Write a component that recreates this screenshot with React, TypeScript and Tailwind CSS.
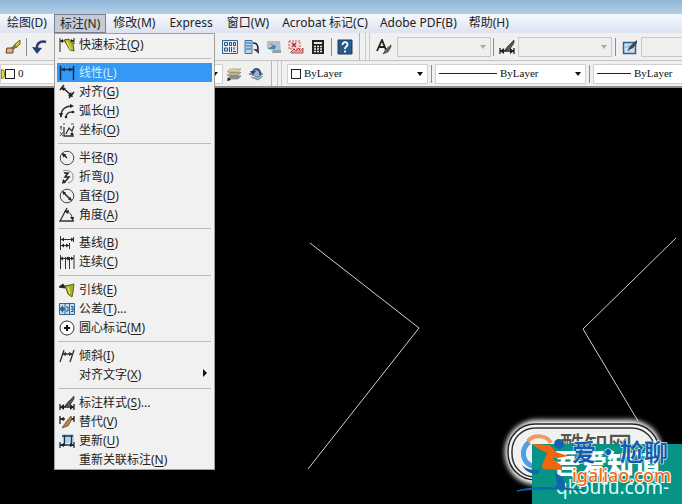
import React from "react";

const uiFont = "font-['Noto_Sans','Noto_Sans_CJK_SC',sans-serif]";

const K = "#222";

const glyphs: Record<string, React.ReactNode> = {
  quick: (
    <>
      <path d="M1 1v14M1 4h14M15 1v6" stroke={K} fill="none" />
      <path d="M1 4l3-2v4zM15 4l-3-2v4z" fill={K} />
      <path d="M5 3l5-1 4 5 1 7-4-1-3-5z" fill="#b9bd2c" stroke="#5b5a16" />
      <path d="M8 5l4 8" stroke="#f3f19a" />
    </>
  ),
  linear: (
    <>
      <path d="M1.500 1v14M14.500 1v14M2 4.500h12" stroke="#0d2d52" strokeWidth="1.500" fill="none" />
      <path d="M2 4.500l4-2v4zM14 4.500l-4-2v4z" fill="#0d2d52" />
    </>
  ),
  aligned: (
    <>
      <path d="M4 4l8 7M1 6l4-5M10 14l5-6" stroke={K} strokeWidth="1.500" fill="none" />
      <path d="M2 3l5 1-3 3zM14 13l-5-1 3-4z" fill={K} />
    </>
  ),
  arc: (
    <>
      <path d="M2 14C2 7 6 3 13 3M7 15c0-4 2-6 6-6" stroke="#333" strokeWidth="1.300" fill="none" />
      <path d="M15 3l-4-2v4zM2 15l-2-5h4z" fill={K} />
      <circle cx="14" cy="9" r="1.300" fill={K} />
      <circle cx="7" cy="14" r="1.300" fill={K} />
    </>
  ),
  ordinate: (
    <>
      <path d="M5 5v9h10M7 12l3-6 3 3 2-5" stroke="#333" fill="none" strokeWidth="1.300" />
      <path d="M1 4l1 2 1-2M2 6v2M1 10l3 4M4 10l-3 4M12 2h3M5 1v2" stroke="#555" fill="none" />
      <circle cx="13" cy="12" r="1.500" fill={K} />
    </>
  ),
  radius: (
    <>
      <circle cx="8" cy="8" r="6.800" fill="none" stroke="#444" />
      <path d="M8 8L4 4" stroke={K} strokeWidth="1.500" />
      <path d="M2.500 3l5 1.500-3 3z" fill={K} />
    </>
  ),
  jogged: (
    <>
      <path d="M4 2c5-2 11 1 10 6 0 4-2 5-5 6" fill="none" stroke="#888" />
      <path d="M5 4h4L6 8h4l-5 6" fill="none" stroke={K} strokeWidth="1.500" />
      <path d="M3 15l1-5 3 3z" fill={K} />
    </>
  ),
  diameter: (
    <>
      <circle cx="8" cy="8" r="6.800" fill="none" stroke="#444" />
      <path d="M4 4l8 8" stroke={K} strokeWidth="1.500" />
      <path d="M3 3l4 1.500-2.500 2.500zM13 13l-4-1.500 2.500-2.500z" fill={K} />
    </>
  ),
  angular: (
    <>
      <path d="M8 1L1 14h14" fill="none" stroke="#333" strokeWidth="1.300" />
      <path d="M7 4c4 1 6 4 6 8" fill="none" stroke="#444" />
      <path d="M5 4l5-1-1 4zM14 14l-3-4h4z" fill={K} />
    </>
  ),
  baseline: (
    <>
      <path d="M1.500 1v14M2 4.500h13M2 10.500h8M10.500 8v6M14.500 2v5" stroke="#333" fill="none" />
      <path d="M2 4.500l3-2v4zM15 4.500l-3-2v4zM2 10.500l3-2v4zM10 10.500l-3-2v4z" fill={K} />
    </>
  ),
  cont: (
    <>
      <path d="M1.500 1v14M6.500 3v12M10.500 3v12M15 1v14M1 4.500h14" stroke="#333" fill="none" />
      <path d="M1 4.500l3-2v4zM7 4.500l2-2 2 2-2 2zM15 4.500l-3-2v4z" fill={K} />
    </>
  ),
  leader: (
    <>
      <path d="M0 5l4-3 2 4zM3 4h4" fill={K} stroke={K} />
      <path d="M6 4l5-1 4-1-1 8-1 5-4-3z" fill="#a9ae2c" stroke="#5d601c" />
      <path d="M9 5l2 7" stroke="#f3f19a" />
    </>
  ),
  tolerance: (
    <>
      <path d="M.5 2.500h15v11H.5zM6 3v10M10.500 3v10" fill="#c4e0f5" stroke="#2d6794" />
      <circle cx="3.300" cy="8" r="1.800" fill="none" stroke="#204f7a" />
      <path d="M3.300 4.500v7M1 8h5M7 6h2v4H7M12 5.500h2v5h-2M12 8h2" stroke="#204f7a" fill="none" />
    </>
  ),
  center: (
    <>
      <circle cx="8" cy="8" r="7" fill="#fff" stroke="#333" />
      <path d="M8 5v6M5 8h6" stroke="#111" strokeWidth="2" />
    </>
  ),
  oblique: (
    <>
      <path d="M5 2L1 14M15 2l-4 12M4 6h10" fill="none" stroke="#333" strokeWidth="1.300" />
      <path d="M3 6l4-2v4zM14 6l-4-2v4z" fill="#333" />
    </>
  ),
  style: (
    <>
      <path d="M1 9v6M15 9v6M1 12h14" stroke={K} strokeWidth="1.300" />
      <path d="M1 12l4-3v6zM15 12l-4-3v6z" fill={K} />
      <path d="M15 1L9 7l-4 5 6-2 4-6z" fill="#555" stroke={K} strokeWidth=".6" />
    </>
  ),
  override: (
    <>
      <path d="M1 2v8M15 2v6M1 5h5M10 5h5" stroke={K} strokeWidth="1.300" />
      <path d="M1 5l4-2v4zM15 5l-4-2v4z" fill={K} />
      <path d="M12 2L7 8l-4 6 6-2 4-7z" fill="#b98445" stroke="#66401a" strokeWidth=".7" />
    </>
  ),
  update: (
    <>
      <path d="M3 1h12v9H4z" fill="#b7d6ec" />
      <path d="M3 3h11M5.500 2v11M12.500 2v11M1 12h14M1 9v6M15 9v6" stroke="#1e344a" fill="none" strokeWidth="1.300" />
      <path d="M1 12l4-2v4zM15 12l-4-2v4z" fill={K} />
    </>
  ),
  match: (
    <>
      <path d="M15 1L9 6l2 3 4-4z" fill="#d8c33a" stroke="#75611c" />
      <path d="M10 5l-4 4 2 2 4-3z" fill="#5f8a3c" />
      <path d="M2 9h6v5H1z" fill="#e8a89a" stroke="#6b3d22" />
    </>
  ),
  undo: (
    <>
      <path d="M14 3C8 1 4 5 5 11" fill="none" stroke="#27426f" strokeWidth="2.500" />
      <path d="M0 8l10 1-5 6z" fill="#27426f" />
    </>
  ),
  palette: (
    <>
      <path d="M.5 1.500h15v13H.5z" fill="#e4edf5" stroke="#3a648a" />
      <path d="M2.500 3.500h3v3h-3zM7.500 3.500h2v3h-2zM11.500 3.500h2v3h-2zM2.500 9h3v3h-3z" fill="#cfe1f1" stroke="#2f5378" />
      <path d="M7.500 8v5M9.500 8v5M12 8v3M11 12.500h3" stroke="#2f5378" />
    </>
  ),
  sheets: (
    <>
      <path d="M1 1.500h7v13H1z" fill="#b7d4ec" stroke="#3675a8" />
      <path d="M2 4h5M2 7h5M2 10h5" stroke="#2e6797" />
      <path d="M9 4c4 0 5 2 5 7" fill="none" stroke={K} strokeWidth="1.500" />
      <path d="M9 10h6v5z" fill="#445" />
    </>
  ),
  markup: (
    <>
      <path d="M1 2h13l1 11H8L1 9z" fill="#b4c1cb" />
      <path d="M3 4l7 3-1 3H1l6-3z" fill="#3f86aa" />
      <path d="M7 11h8v3H6z" fill="#8fa0ad" />
    </>
  ),
  cloud: (
    <>
      <path d="M1 2h11v8H1z" fill="#f5d7d7" stroke="#c25459" strokeDasharray="2 1" />
      <path d="M4 4l4 4M8 4L4 8" stroke="#b52d38" strokeWidth="1.500" />
      <path d="M3 13l3-3 2 2 3-3 1 3 3-3v5H3z" fill="#e3aaa9" stroke="#b64b51" />
    </>
  ),
  calc: (
    <>
      <path d="M2 1h12v14H2z" fill="#222" />
      <path d="M4 3h8v2H4z" fill="#dfe5dc" />
      <path d="M4 7.500h8M4 10h8M4 12.500h8" stroke="#eee" strokeWidth="1.300" strokeDasharray="2 1" />
    </>
  ),
  help: (
    <>
      <path d="M1 1h14v14H1z" fill="#28598c" stroke="#163c66" />
      <path d="M5.500 6c0-4 5.500-3.500 5 0-.3 1.500-2.500 1.500-2.500 4M8 11.500v2" stroke="#fff" strokeWidth="1.800" fill="none" />
    </>
  ),
  textStyle: (
    <>
      <path d="M1 12L6 1l4 10M3 8h6" fill="none" stroke="#222" strokeWidth="1.800" />
      <path d="M15 6l-5 4-3 5 5-2 3-5z" fill="#666" stroke="#333" strokeWidth=".6" />
    </>
  ),
  tableStyle: (
    <>
      <path d="M1.500 3.500h12v11h-12z" fill="#cce0f0" stroke="#2f5f8a" strokeWidth="1.500" />
      <path d="M3 8h9M7 5v8" stroke="#8bb0cf" />
      <path d="M15 1L9 6l-4 6 6-3 4-5z" fill="#34495e" />
    </>
  ),
  layers: (
    <>
      <path d="M4 3h11l-3 3H1z" fill="#e9d98a" stroke="#8f8440" strokeWidth=".6" />
      <path d="M4 6.500h11l-3 3H1z" fill="#b9b58e" stroke="#777" strokeWidth=".6" />
      <path d="M4 10h11l-3 3H3z" fill="#8e979b" stroke="#666" strokeWidth=".6" />
      <path d="M1 15l1-4 3 3z" fill={K} />
    </>
  ),
  layerPrev: (
    <>
      <path d="M1 8l8-4 6 4-5 3zM3 11l7 3 5-4" fill="#9cb3c9" stroke="#50677f" strokeWidth=".7" />
      <path d="M12 9c1-6-4-8-7-4" fill="none" stroke="#27496f" strokeWidth="1.800" />
      <path d="M2 5l6 0-3 4z" fill="#27496f" />
    </>
  ),
};

function Icon({ name }: { name: string }) {
  return (
    <svg viewBox="0 0 16 16" className="size-4 shrink-0" aria-hidden="true">
      {glyphs[name]}
    </svg>
  );
}

type Item = { icon?: string; label: string; mnemonic: string; more?: string; sub?: boolean; active?: boolean };

const groups: Item[][] = [
  [{ icon: "quick", label: "快速标注", mnemonic: "Q" }],
  [
    { icon: "linear", label: "线性", mnemonic: "L", active: true },
    { icon: "aligned", label: "对齐", mnemonic: "G" },
    { icon: "arc", label: "弧长", mnemonic: "H" },
    { icon: "ordinate", label: "坐标", mnemonic: "O" },
  ],
  [
    { icon: "radius", label: "半径", mnemonic: "R" },
    { icon: "jogged", label: "折弯", mnemonic: "J" },
    { icon: "diameter", label: "直径", mnemonic: "D" },
    { icon: "angular", label: "角度", mnemonic: "A" },
  ],
  [
    { icon: "baseline", label: "基线", mnemonic: "B" },
    { icon: "cont", label: "连续", mnemonic: "C" },
  ],
  [
    { icon: "leader", label: "引线", mnemonic: "E" },
    { icon: "tolerance", label: "公差", mnemonic: "T", more: "..." },
    { icon: "center", label: "圆心标记", mnemonic: "M" },
  ],
  [
    { icon: "oblique", label: "倾斜", mnemonic: "I" },
    { label: "对齐文字", mnemonic: "X", sub: true },
  ],
  [
    { icon: "style", label: "标注样式", mnemonic: "S", more: "..." },
    { icon: "override", label: "替代", mnemonic: "V" },
    { icon: "update", label: "更新", mnemonic: "U" },
    { label: "重新关联标注", mnemonic: "N" },
  ],
];

function DimensionMenu() {
  return (
    <div role="menu" className="absolute left-0 top-full z-20 w-[161px] border border-[#a0a0a0] bg-[#f1f1f1] px-0.5 pt-px">
      {groups.map((group, g) => (
        <div key={g} role="group">
          {g > 0 && (
            <div className="flex h-[9px] items-center px-px">
              <div className="h-px w-full bg-[#bdbdbd]" />
            </div>
          )}
          {group.map((item) => (
            <button
              key={item.label}
              role="menuitem"
              className={`flex h-[19px] w-full items-center gap-1 pl-0.5 text-left text-xs whitespace-nowrap ${
                item.active ? "bg-[#3399f5] text-[#c9f0ff]" : "text-[#222]"
              }`}
            >
              {item.icon ? <Icon name={item.icon} /> : <span className="size-4 shrink-0" />}
              <span className="flex-1">
                {item.label}(<u className="underline-offset-2">{item.mnemonic}</u>){item.more}
              </span>
              {item.sub && (
                <svg viewBox="0 0 6 8" className="mr-1 mb-1 h-2 w-1.5" aria-hidden="true">
                  <path d="M1 0l4 4-4 4z" fill="#111" />
                </svg>
              )}
            </button>
          ))}
        </div>
      ))}
    </div>
  );
}

function MenuBar() {
  const item = "h-[18px] px-[7px] leading-[18px] whitespace-nowrap";
  return (
    <nav className="flex h-[19px] bg-linear-to-b from-[#f5f8fd] to-[#dce3f1] text-xs text-[#222]">
      <button className={item}>绘图(D)</button>
      <div className="relative">
        <button aria-expanded="true" className="h-[19px] border border-[#777f8b] bg-[#c5ccd8] px-[5px] leading-[17px] whitespace-nowrap">
          标注(N)
        </button>
        <DimensionMenu />
      </div>
      {["修改(M)", "Express", "窗口(W)"].map((label) => (
        <button key={label} className={item}>{label}</button>
      ))}
      {["Acrobat 标记(C)", "Adobe PDF(B)", "帮助(H)"].map((label) => (
        <button key={label} className="h-[18px] px-1.5 leading-[18px] whitespace-nowrap">{label}</button>
      ))}
    </nav>
  );
}

function Tool({ name, label }: { name: string; label: string }) {
  return (
    <button aria-label={label} className="flex w-[22px] shrink-0 justify-center">
      <Icon name={name} />
    </button>
  );
}

function Divider() {
  return <div className="h-[18px] w-px shrink-0 bg-[#8c8c8c]" />;
}

function Grip() {
  return (
    <div className="flex h-full shrink-0 gap-[3px]">
      <div className="w-px bg-[#b5b5b5]" />
      <div className="ml-0.5 w-px bg-[#c9c9c9]" />
      <div className="w-px bg-[#c9c9c9]" />
    </div>
  );
}

function Arrow({ muted }: { muted?: boolean }) {
  return (
    <svg viewBox="0 0 8 4" className="h-1 w-2 shrink-0" aria-hidden="true">
      <path d="M1 0h6L4 4z" fill={muted ? "#aaa" : "#111"} />
    </svg>
  );
}

function Combo({ label, value, lead, width, disabled }: {
  label: string;
  value: string;
  lead?: React.ReactNode;
  width: string;
  disabled?: boolean;
}) {
  return (
    <label
      className={`flex h-5 items-center gap-[3px] overflow-hidden border pr-[3px] ${width} ${
        disabled ? "border-[#c8c8c8] bg-[#efefef]" : "border-[#d0d0d0] bg-white"
      }`}
    >
      {lead}
      <select
        aria-label={label}
        disabled={disabled}
        className="min-w-0 flex-1 appearance-none bg-transparent font-['Liberation_Serif',serif] text-[11px] font-medium text-[#111] outline-none"
      >
        <option>{value}</option>
      </select>
      <Arrow muted={disabled} />
    </label>
  );
}

function Toolbars() {
  return (
    <div className="border-b-2 border-[#8b8b8b] bg-[#f0f0f0]">
      <div className="flex h-7 items-center overflow-hidden border-b border-[#c4c4c4]">
        <div className="flex w-[219px] shrink-0 items-center pl-0.5">
          <Tool name="match" label="特性匹配" />
          <div className="px-0.5"><Divider /></div>
          <Tool name="undo" label="放弃" />
        </div>
        <Tool name="palette" label="工具选项板" />
        <Tool name="sheets" label="图纸集" />
        <Tool name="markup" label="标记集" />
        <Tool name="cloud" label="修订云线" />
        <Tool name="calc" label="计算器" />
        <div className="px-0.5"><Divider /></div>
        <Tool name="help" label="帮助" />
        <div className="h-full px-[3px]"><Grip /></div>
        <Tool name="textStyle" label="文字样式" />
        <Combo label="文字样式列表" value="" width="ml-0.5 w-[94px] shrink-0" disabled />
        <div className="px-0.5"><Divider /></div>
        <Tool name="style" label="标注样式" />
        <Combo label="标注样式列表" value="" width="w-[94px] shrink-0" disabled />
        <div className="px-[3px]"><Divider /></div>
        <Tool name="tableStyle" label="表格样式" />
        <Combo label="表格样式列表" value="" width="-mr-5 min-w-[60px] flex-1" disabled />
      </div>
      <div className="flex h-[25px] items-center overflow-hidden">
        <Combo
          label="图层"
          value="0"
          width="w-[223px] shrink-0"
          lead={
            <span className="flex items-center">
              <span className="h-2.5 w-1 rounded-r-full border border-[#8b8b20] bg-[#e1e14a]" />
              <span className="size-2.5 border border-[#222]" />
            </span>
          }
        />
        <Tool name="layers" label="图层特性" />
        <Tool name="layerPrev" label="上一个图层" />
        <div className="h-full pr-[5px] pl-1"><Grip /></div>
        <Combo
          label="颜色"
          value="ByLayer"
          width="w-[141px] shrink-0 pl-[3px]"
          lead={<span className="size-2.5 border border-[#222]" />}
        />
        <div className="px-[3px]"><Divider /></div>
        <Combo
          label="线型"
          value="ByLayer"
          width="w-[151px] shrink-0 pl-[3px]"
          lead={<span className="h-px w-[58px] shrink-0 bg-[#222]" />}
        />
        <div className="px-[3px]"><Divider /></div>
        <Combo
          label="线宽"
          value="ByLayer"
          width="-mr-5 min-w-[100px] flex-1 pl-[3px]"
          lead={<span className="h-px w-[34px] shrink-0 bg-[#222]" />}
        />
      </div>
    </div>
  );
}

function Watermark() {
  return (
    <svg
      viewBox="500 414 182 90"
      className="absolute right-0 bottom-0 h-[90px] w-[182px] font-['Noto_Sans_CJK_SC',sans-serif]"
    >
      <defs>
        <filter id="glow" x="-20%" y="-30%" width="140%" height="160%">
          <feGaussianBlur stdDeviation="2.500" />
        </filter>
      </defs>
      <rect x="505" y="420" width="157" height="65" rx="32" fill="#fff" filter="url(#glow)" />
      <rect x="508" y="424" width="151" height="56" rx="27" fill="#f4f4f4" stroke="#222" strokeWidth="1.500" />
      <rect x="512" y="428" width="143" height="49" rx="23" fill="#f1f1f1" stroke="#333" strokeWidth="1.500" />
      <path d="M534 467c-12-4-14-17-5-25" fill="none" stroke="#4c9fe0" strokeWidth="5" />
      <path d="M528 441c6-7 19-6 23 2" fill="none" stroke="#ed9a63" strokeWidth="4" />
      <text x="560" y="454" fontSize="24" fontWeight="500" fill="#55554b">酷知网</text>
      <rect x="532" y="444" width="150" height="60" fill="#079487" />
      <text x="553" y="474" fontSize="27" fontWeight="900" fill="#fff">吾爱知道</text>
      <text x="550" y="494" fontSize="19" fill="#d9fff8" className="font-['Noto_Sans',sans-serif]">-qkoufu.com-</text>
      <path d="M517 491c17-5 35-4 67-1-25-1-48-2-67 1z" fill="#1263ad" stroke="#1263ad" />
      <path d="M555 473l8 4 3 12h-14l5-4-1-7z" fill="#1263ad" />
      <path d="M522 465c4 4 8 5 18 5l-2 4c-8 0-13-3-16-9z" fill="#1263ad" />
      <path d="M532 444l18 1 6 7 12 4-10 2h-6l10 8v4l-19-1-1-4 5-12-10-5z" fill="#f0650e" />
      <circle cx="559" cy="444" r="5" fill="#1263ad" />
      <text x="572" y="461" fontSize="24" fontWeight="700" fill="#145dae" stroke="#fff" strokeWidth="1" paintOrder="stroke">爱·尬聊</text>
      <text x="572" y="482" fontSize="18" fontWeight="500" fill="#f36c13" stroke="#fff" strokeWidth="2" paintOrder="stroke" className="font-['Noto_Sans',sans-serif]">igaliao.com</text>
    </svg>
  );
}

export default function App() {
  return (
    <div className={`flex min-h-screen flex-col overflow-hidden bg-black ${uiFont}`}>
      <header>
        <div className="h-3.5 bg-linear-to-b from-[#91b7d9] to-[#b3cde5]" />
        <MenuBar />
        <Toolbars />
      </header>
      <main className="relative flex-1">
        <svg viewBox="0 88 682 416" className="absolute top-0 left-0 h-[416px] w-[682px]" aria-label="绘图区">
          <path d="M310 243l109 85-111 141M676 238l-93 91 55 92" fill="none" stroke="#d0d0d0" />
        </svg>
        <Watermark />
      </main>
    </div>
  );
}
